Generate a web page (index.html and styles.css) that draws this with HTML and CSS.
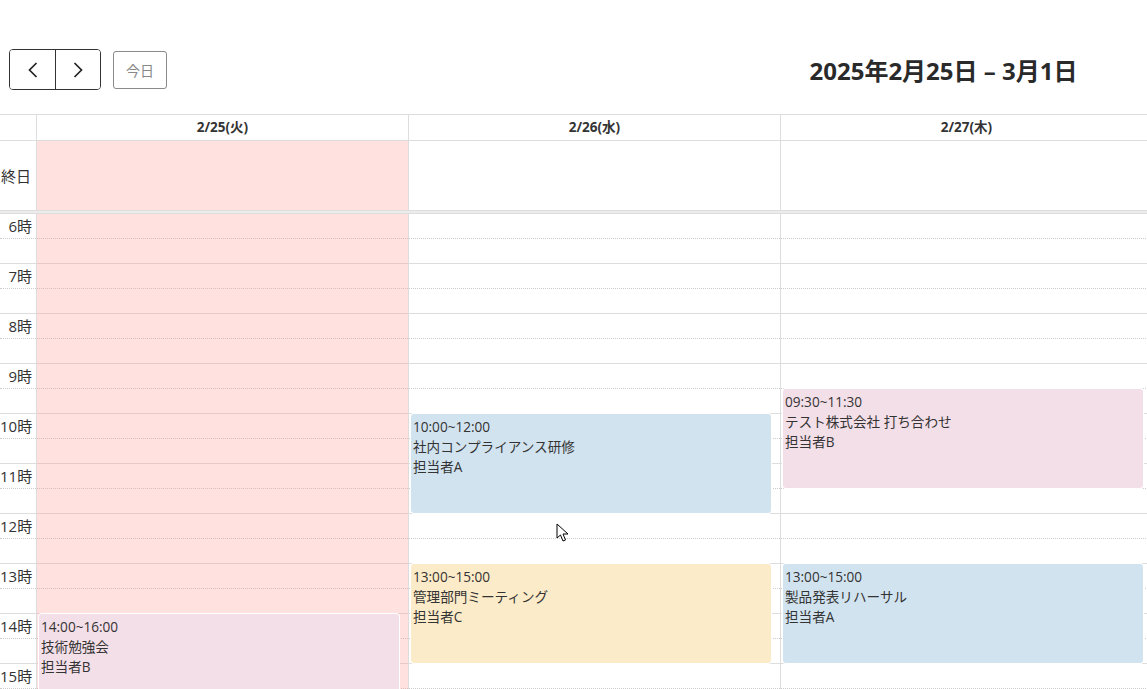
FILE: index.html
```html
<!DOCTYPE html>
<html lang="ja">
<head>
    <meta charset="utf-8">
    <title>週間スケジュール</title>
    <link rel="stylesheet" href="styles.css">
</head>
<body>
    <div class="calendar">
        <div class="toolbar">
            <div class="toolbar-left">
                <div class="btn-group">
                    <button class="btn btn-nav" aria-label="前へ">
                        <svg width="16" height="16" viewBox="0 0 16 16"><path d="M11.5 1 L4.5 8 L11.5 15" fill="none" stroke="#222" stroke-width="1.7"/></svg>
                    </button>
                    <button class="btn btn-nav" aria-label="次へ">
                        <svg width="16" height="16" viewBox="0 0 16 16"><path d="M4.5 1 L11.5 8 L4.5 15" fill="none" stroke="#222" stroke-width="1.7"/></svg>
                    </button>
                </div>
                <button class="btn btn-today" disabled>今日</button>
            </div>
            <h2 class="title">2025年2月25日 – 3月1日</h2>
            <div class="toolbar-right"></div>
        </div>

        <div class="head-row">
            <div class="axis-cell"></div>
            <div class="day-head">2/25(火)</div>
            <div class="day-head">2/26(水)</div>
            <div class="day-head">2/27(木)</div>
            <div class="day-head">2/28(金)</div>
            <div class="day-head">3/1(土)</div>
        </div>

        <div class="allday-row">
            <div class="axis-cell allday-label">終日</div>
            <div class="allday-cell off-day"></div>
            <div class="allday-cell"></div>
            <div class="allday-cell"></div>
            <div class="allday-cell"></div>
            <div class="allday-cell"></div>
        </div>

        <div class="divider"></div>

        <div class="time-body">
            <!-- 30分ごとのスロット -->
            <div class="slots" id="slots"></div>

            <div class="cols">
                <div class="axis-col"></div>
                <div class="col off-day">
                    <div class="event ev-pink" style="top:400px;height:99px">
                        <div>14:00~16:00</div>
                        <div>技術勉強会</div>
                        <div>担当者B</div>
                    </div>
                </div>
                <div class="col">
                    <div class="event ev-blue" style="top:200px;height:99px">
                        <div>10:00~12:00</div>
                        <div>社内コンプライアンス研修</div>
                        <div>担当者A</div>
                    </div>
                    <div class="event ev-yellow" style="top:350px;height:99px">
                        <div>13:00~15:00</div>
                        <div>管理部門ミーティング</div>
                        <div>担当者C</div>
                    </div>
                </div>
                <div class="col">
                    <div class="event ev-pink" style="top:175px;height:99px">
                        <div>09:30~11:30</div>
                        <div>テスト株式会社 打ち合わせ</div>
                        <div>担当者B</div>
                    </div>
                    <div class="event ev-blue" style="top:350px;height:99px">
                        <div>13:00~15:00</div>
                        <div>製品発表リハーサル</div>
                        <div>担当者A</div>
                    </div>
                </div>
                <div class="col"></div>
                <div class="col"></div>
            </div>
        </div>
    </div>

    <svg class="cursor" width="14" height="20" viewBox="0 0 14 20">
        <path d="M1 1 L1 15 L4.5 12 L7 18 L9.5 17 L7 11 L12 11 Z" fill="#fff" stroke="#000" stroke-width="1" stroke-linejoin="round"/>
    </svg>

    <script>
        // 6時から20時までのスロットを生成
        const slots = document.getElementById('slots');
        for (let h = 6; h < 20; h++) {
            [0, 30].forEach(m => {
                const row = document.createElement('div');
                row.className = m === 0 ? 'slot slot-minor' : 'slot slot-major';
                const label = document.createElement('div');
                label.className = 'slot-label';
                label.textContent = m === 0 ? h + '時' : '';
                row.appendChild(label);
                slots.appendChild(row);
            });
        }
    </script>
</body>
</html>
```

FILE: styles.css
```css
html, body {
    margin: 0;
    overflow: hidden;
    background: #fff;
}
body {
    font-family: "Open Sans", "Noto Sans CJK JP", sans-serif;
    color: #333;
    position: relative;
    height: 689px;
}
.calendar {
    width: 1896px;
    padding-top: 49px;
}

/* ツールバー */
.toolbar {
    display: grid;
    grid-template-columns: 1fr auto 1fr;
    align-items: center;
    padding: 0 18px 0 9px;
    height: 41px;
    margin-bottom: 24px;
}
.toolbar-left {
    display: flex;
    align-items: center;
    gap: 12px;
}
.btn-group {
    display: flex;
    border: 1px solid #333;
    border-radius: 4px;
    overflow: hidden;
}
.btn {
    font-family: inherit;
    background: #fff;
    cursor: pointer;
}
.btn-nav {
    width: 45px;
    height: 39px;
    border: none;
    display: flex;
    align-items: center;
    justify-content: center;
    padding: 0;
}
.btn-nav + .btn-nav {
    border-left: 1px solid #333;
}
.btn-today {
    height: 38px;
    width: 54px;
    border: 1px solid #8a8a8a;
    border-radius: 3px;
    color: #888;
    font-size: 14px;
    padding: 0;
}
.title {
    margin: 0;
    font-size: 24px;
    font-weight: 700;
    color: #2a2a2a;
    white-space: nowrap;
}

/* ヘッダー */
.head-row,
.allday-row,
.cols {
    display: grid;
    grid-template-columns: 36px repeat(5, 372px);
}
.head-row {
    border-top: 1px solid #ddd;
    border-bottom: 1px solid #ddd;
    height: 25px;
}
.day-head {
    border-left: 1px solid #ddd;
    font-size: 13.5px;
    font-weight: 700;
    text-align: center;
    line-height: 25px;
    white-space: nowrap;
    overflow: hidden;
}
.allday-row {
    height: 69px;
    border-bottom: 1px solid #ddd;
}
.allday-label {
    display: flex;
    align-items: center;
    justify-content: flex-end;
    padding-right: 5px;
    font-size: 15px;
    white-space: nowrap;
}
.allday-cell {
    border-left: 1px solid #ddd;
}
.divider {
    height: 2px;
    background: #ececec;
    border-bottom: 1px solid #ddd;
}

/* 時間グリッド */
.time-body {
    position: relative;
}
.slot {
    height: 24px;
    display: flex;
}
.slot-minor {
    border-bottom: 1px dotted #ccc;
}
.slot-major {
    border-bottom: 1px solid #ddd;
}
.slot-label {
    width: 36px;
    box-sizing: border-box;
    padding: 2px 4px 0 0;
    text-align: right;
    font-size: 15px;
    line-height: 20px;
    white-space: nowrap;
}
.cols {
    position: absolute;
    top: 0;
    left: 0;
    bottom: 0;
}
.col {
    position: relative;
    border-left: 1px solid #ddd;
}
.off-day {
    background: rgba(255, 158, 148, 0.3);
}

/* 予定 */
.event {
    position: absolute;
    left: 2px;
    right: 2.5%;
    box-sizing: border-box;
    border-radius: 3px;
    box-shadow: 0 0 0 1px #fff;
    padding: 3px 2px 0;
    font-size: 13.6px;
    line-height: 20px;
    color: #333;
    overflow: hidden;
    white-space: nowrap;
}
.ev-blue {
    background: #d2e3f0;
}
.ev-yellow {
    background: #fcebc8;
}
.ev-pink {
    background: #f3dfe8;
}

.cursor {
    position: absolute;
    left: 556px;
    top: 523px;
}
```
